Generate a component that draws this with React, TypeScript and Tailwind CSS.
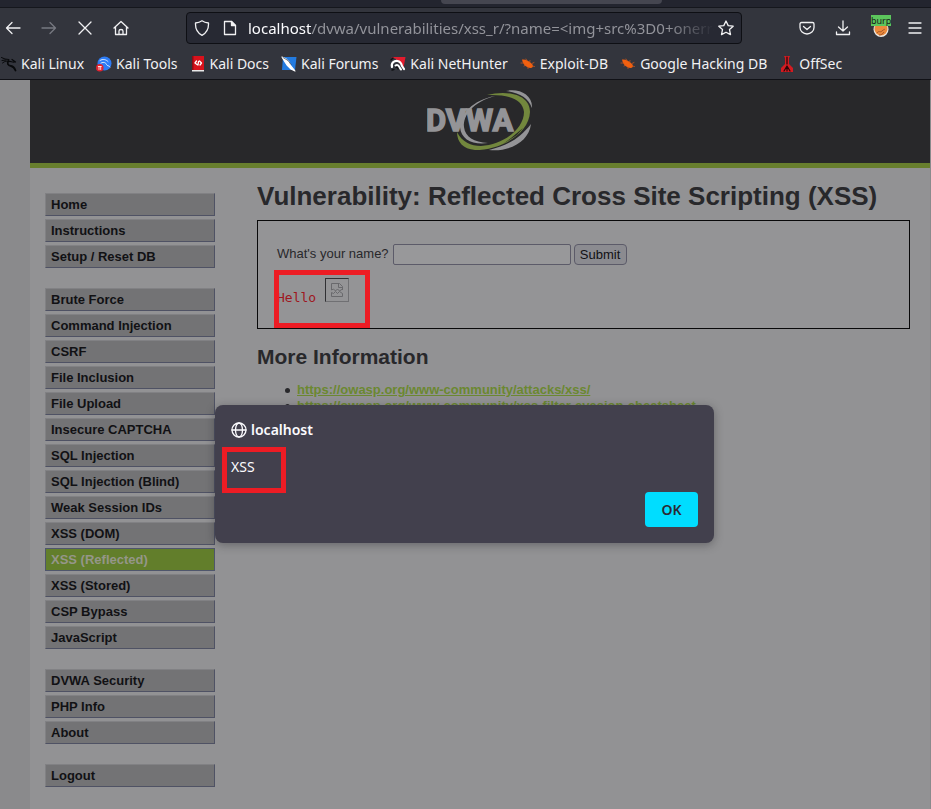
import type { ReactNode } from "react";

const menuGroups: string[][] = [
  ["Home", "Instructions", "Setup / Reset DB"],
  [
    "Brute Force",
    "Command Injection",
    "CSRF",
    "File Inclusion",
    "File Upload",
    "Insecure CAPTCHA",
    "SQL Injection",
    "SQL Injection (Blind)",
    "Weak Session IDs",
    "XSS (DOM)",
    "XSS (Reflected)",
    "XSS (Stored)",
    "CSP Bypass",
    "JavaScript",
  ],
  ["DVWA Security", "PHP Info", "About"],
  ["Logout"],
];

const activeItem = "XSS (Reflected)";

const references = [
  "https://owasp.org/www-community/attacks/xss/",
  "https://owasp.org/www-community/xss-filter-evasion-cheatsheet",
];

function Icon({ children, className = "size-4" }: { children: ReactNode; className?: string }) {
  return (
    <svg
      viewBox="0 0 16 16"
      className={`shrink-0 ${className}`}
      fill="none"
      stroke="currentColor"
      strokeWidth="1.3"
      strokeLinecap="round"
      strokeLinejoin="round"
      aria-hidden="true"
    >
      {children}
    </svg>
  );
}

const dragon = (
  <>
    <path d="M.5 1.500 4 3l4 .5M1 4.500 5 4" strokeWidth="1" />
    <path d="M1.500 7C4 5 6 4.500 8 5.500" strokeWidth="1" />
    <path d="M7.500 5c-2 2-.5 4.500 2.500 5 2.500.5 3.500 2 4.500 4.500" strokeWidth="1.800" />
    <path d="M8 5.500c2-.5 3 1 5.500.5M11 3.500 14.500 6" strokeWidth="1.200" />
  </>
);

const bookmarks: { label: string; icon: ReactNode }[] = [
  { label: "Kali Linux", icon: <g stroke="#08090b">{dragon}</g> },
  {
    label: "Kali Tools",
    icon: (
      <>
        <circle cx="8.500" cy="7.500" r="7" fill="#2d7cf6" stroke="none" />
        <path d="M4 4.500c3-2 6-1 8 1M5 7c3-1.500 5 0 5.500 1.500s3 1 3.500 2.500" stroke="#dcecff" strokeWidth="1" />
        <circle cx="3.800" cy="11.800" r="3.800" fill="#e02430" stroke="none" />
        <path d="M2.300 10.500h3M3 10.500v3M4.700 10.500v3" stroke="#fff" strokeWidth=".8" />
      </>
    ),
  },
  {
    label: "Kali Docs",
    icon: (
      <>
        <path d="M2 0h12v14H2z" fill="#d8121c" stroke="none" />
        <path d="M2 14h12v1.500H2z" fill="#e9e9e9" stroke="none" />
        <path d="M2 0h1.500v14H2z" fill="#900a12" stroke="none" />
        <path d="M6.500 5 5 7l2 1.500M9.500 5 11.500 7 10 9M8.500 5.500 8 9" stroke="#fff" />
      </>
    ),
  },
  {
    label: "Kali Forums",
    icon: (
      <>
        <path d="M2 1h13.500L14 14H1z" fill="#237be0" stroke="none" />
        <path d="m1 1 4 2 3 3 2 4 4 5-4-2-4-4-2-3z" fill="#fff" stroke="#fff" strokeWidth="1.200" />
        <path d="m2 1.500 5 3 3 4" stroke="#17222e" strokeWidth=".6" />
      </>
    ),
  },
  {
    label: "Kali NetHunter",
    icon: (
      <>
        <path d="M1 1h14.500L13.500 12 6 3z" fill="#e21b2d" stroke="none" />
        <path d="M2 11c-1-4 2-6.500 5.500-6 3 .5 4 3 4.500 5l2 3" stroke="#fff" strokeWidth="2.200" />
        <path d="M5.500 9.500c3-2 3.500 2 5.500 4" stroke="#fff" strokeWidth="2" />
        <path d="m1 4 2-2M4 13.500 2 14M8 13c0-1.500-1-2-2-1.500" stroke="#101114" />
      </>
    ),
  },
  { label: "Exploit-DB", icon: <Bug /> },
  { label: "Google Hacking DB", icon: <Bug /> },
  {
    label: "OffSec",
    icon: (
      <>
        <path d="M5 0h6l-1 2v6l4 4v4H2v-4l4-4V2z" fill="#d21b21" stroke="none" />
        <path d="M8 1v7M5 15l3-5 3 5M8 10v5" stroke="#270608" strokeWidth="1.200" />
      </>
    ),
  },
];

function Bug() {
  return (
    <g stroke="#d95a1a">
      <path d="M2 3.500c3-.5 7 1 10.500 5 1 2 0 3.500-2 3.500C6.500 11.500 3 9 2 3.500z" fill="#f2600f" stroke="none" />
      <path d="M1 7h3M6 3l1 2M10 4.500 9.500 7M4 10l2-1M12 7.500l2-1M12 10l2.500.5M8 11v1.500" strokeWidth=".7" />
    </g>
  );
}

function NavButton({ label, children, className = "" }: { label: string; children: ReactNode; className?: string }) {
  return (
    <button type="button" aria-label={label} className={`flex size-4 shrink-0 items-center justify-center ${className}`}>
      {children}
    </button>
  );
}

function BrowserBar() {
  return (
    <header className="h-20 overflow-hidden border-b border-[#101116] bg-[#33353d] font-['Noto_Sans',sans-serif] text-[#f1f1f3]">
      <div className="flex h-2 justify-center border-b border-[#15171d] bg-[#23252f] pl-[172px]">
        <div className="h-1 w-[221px] rounded-b bg-[#454650]" />
      </div>
      <div className="flex h-10 items-center pr-2 pl-1">
        <div className="flex w-[182px] shrink-0 items-center gap-5">
          <NavButton label="Back" className="ml-px">
            <Icon><path d="M15 8H1.500M7 2.500 1.500 8 7 13.500" /></Icon>
          </NavButton>
          <NavButton label="Forward" className="text-[#777981]">
            <Icon><path d="M1 8h13.500M9 2.500 14.500 8 9 13.500" /></Icon>
          </NavButton>
          <NavButton label="Stop">
            <Icon><path d="m2 2 12 12M14 2 2 14" /></Icon>
          </NavButton>
          <NavButton label="Home">
            <Icon><path d="m1 8 7-6.500L15 8M2.500 7v7.500h11V7M6 14.500V11q0-1.500 2-1.500t2 1.500v3.500" /></Icon>
          </NavButton>
        </div>
        <div className="flex h-8 w-[556px] min-w-0 items-center rounded-sm border border-[#0e0f14] bg-[#272933] px-[7px]">
          <Icon><path d="M8 .8c2 1.500 4 2 6.500 2.200.3 6-2 10-6.500 12.300C3.500 13 1.200 9 1.500 3 4 2.800 6 2.300 8 .8z" /></Icon>
          <Icon className="ml-3 size-4">
            <path d="M2.500 1.500h7l4 4v9h-11z" />
            <path d="M9.500 1.500v4h4z" fill="currentColor" />
          </Icon>
          <div className="ml-[10px] min-w-0 flex-1 overflow-hidden whitespace-nowrap mask-r-from-90% text-[15px] leading-6 text-[#92939a]">
            <span className="text-[#fbfbfe]">localhost</span>/dvwa/vulnerabilities/xss_r/?name=&lt;img+src%3D0+onerro
          </div>
          <NavButton label="Bookmark this page" className="ml-1">
            <Icon><path d="m8 1 2.200 4.600 5 .6-3.700 3.400 1 5L8 12.200l-4.500 2.400 1-5L.8 6.200l5-.6z" /></Icon>
          </NavButton>
        </div>
        <div className="ml-auto flex items-center gap-5">
          <NavButton label="Save to Pocket">
            <Icon><path d="M2.500 2.500h11q1.500 0 1.500 1.500v3.500a7 6.500 0 0 1-14 0V4q0-1.500 1.500-1.500zM4.500 6.500 8 9.500l3.500-3" /></Icon>
          </NavButton>
          <NavButton label="Downloads">
            <Icon><path d="M8 1v10M3.500 7 8 11l4.500-4M1.500 12v2.500h13V12" /></Icon>
          </NavButton>
          <button type="button" aria-label="Proxy: burp" className="relative flex size-5 items-end justify-center">
            <svg viewBox="0 0 16 16" className="size-4" aria-hidden="true">
              <circle cx="8" cy="7.500" r="7.500" fill="#ece9e4" />
              <circle cx="8" cy="7" r="6.500" fill="#eb8a3c" />
              <path d="M4 11c2-3 3 0 5-2s2-1 3-2M6 13c2 0 4-1 5-3" fill="none" stroke="#a4562b" strokeWidth="1" />
            </svg>
            <span className="absolute -top-[3px] left-0 h-[11px] w-5 bg-[#5cc65c] text-center text-[9px] leading-[11px] text-[#171a1a]">
              burp
            </span>
          </button>
          <NavButton label="Menu" className="-ml-1">
            <Icon><path d="M2 3h12M2 8h12M2 13h12" /></Icon>
          </NavButton>
        </div>
      </div>
      <nav aria-label="Bookmarks" className="flex h-[31px] items-center gap-3 pl-px text-[14px] leading-5 whitespace-nowrap">
        {bookmarks.map((b) => (
          <a key={b.label} href="#" className="flex items-center gap-1">
            <Icon>{b.icon}</Icon>
            {b.label}
          </a>
        ))}
      </nav>
    </header>
  );
}

function Logo() {
  return (
    <svg viewBox="0 0 106 62" className="h-[62px] w-[106px]" role="img" aria-label="DVWA">
      <path d="M79 1C92-2 106 5 105 18 101 8 93 3 79 1z" fill="#949497" />
      <path d="M104 34C102 51 84 62 62 60 82 55 93 48 104 34z" fill="#949497" />
      <path
        d="M60 5C80 0 103 4 103 22 102 44 74 60 48 60 36 59 30 52 30 42 35 52 44 56 54 56 76 55 97 39 97 22 96 9 80 4 60 5z"
        fill="#72873d"
      />
      <path d="M96 38 84 48l-8 6 14-9z" fill="#28282a" />
      <path d="M68 6C46 12 36 25 37 37c1 10 10 15 24 16-15 2-27-3-28-16C33 24 46 10 68 6z" fill="#949497" />
      <text
        x="-1"
        y="41"
        fill="#949497"
        stroke="#949497"
        strokeWidth="1.500"
        className="font-['Roboto',sans-serif] text-[31px] font-bold"
      >
        DVWA
      </text>
    </svg>
  );
}

function SideMenu() {
  return (
    <nav aria-label="Main menu" className="flex w-[170px] shrink-0 flex-col gap-5">
      {menuGroups.map((group) => (
        <ul key={group[0]} className="flex flex-col gap-[3px]">
          {group.map((item) => (
            <li key={item}>
              <a
                href="#"
                aria-current={item === activeItem ? "page" : undefined}
                className={
                  item === activeItem
                    ? "block h-[23px] border border-[#4f566c] bg-[#627e2b] px-[5px] text-[13px] leading-[21px] font-bold text-[#959689]"
                    : "block h-[23px] border border-t-[#818184] border-r-[#4f5264] border-b-[#4f5264] border-l-[#818184] bg-[#737375] px-[5px] text-[13px] leading-[21px] font-bold text-[#111114]"
                }
              >
                {item}
              </a>
            </li>
          ))}
        </ul>
      ))}
    </nav>
  );
}

function BrokenImage() {
  return (
    <span className="inline-flex size-6 items-center justify-center border border-t-[#303033] border-r-[#707073] border-b-[#707073] border-l-[#303033]">
      <svg viewBox="0 0 14 16" className="h-4 w-3.5" fill="none" stroke="#69696c" role="img" aria-label="Broken image">
        <path d="M1.500 8V1.500h8l3 3V8M8.500 1.500v4h4M1.500 8l2-1 2 2 2-2 2 2 3-2" />
        <path d="M1.500 14.500v-4l2 1 2-2 2 2 2-2 3 2v3z" />
      </svg>
    </span>
  );
}

function MainContent() {
  return (
    <main className="min-w-0 flex-1 text-[#28282b]">
      <h1 className="text-[26px] leading-8 font-bold">Vulnerability: Reflected Cross Site Scripting (XSS)</h1>
      <div className="mt-2 h-[109px] border border-[#09090a] bg-[#949496] px-[19px] pt-[23px] text-[13px]">
        <form className="flex items-start gap-[3px]" onSubmit={(e) => e.preventDefault()}>
          <label htmlFor="name" className="mr-px leading-5">What's your name?</label>
          <input
            id="name"
            name="name"
            type="text"
            className="h-[21px] w-[178px] rounded-xs border border-[#5c5b69] bg-[#98989a] px-1 outline-none"
          />
          <button
            type="submit"
            className="h-[21px] w-[53px] rounded border border-[#5c5b69] bg-[#8b8b90] leading-4 text-[#111114]"
          >
            Submit
          </button>
        </form>
        <div className="relative mt-[13px] flex items-start gap-[9px] font-['DejaVu_Sans_Mono',monospace] text-[#9f1620]">
          <span className="pt-3 leading-4">Hello</span>
          <BrokenImage />
          <div className="absolute -top-2 -left-[3px] h-[58px] w-24 border-5 border-[#ed1c24]" />
        </div>
      </div>
      <h2 className="mt-4 text-[21px] leading-6 font-bold">More Information</h2>
      <ul className="mt-[13px] pl-7 text-[13px] leading-4 font-bold">
        {references.map((url) => (
          <li key={url} className="flex items-center gap-[7px]">
            <span className="size-[5px] shrink-0 rounded-full bg-[#28282b]" />
            <a href="#" className="text-[#6b8830] underline">{url}</a>
          </li>
        ))}
      </ul>
    </main>
  );
}

function AlertDialog() {
  return (
    <div className="absolute top-[325px] right-0.5 left-0 flex justify-center">
      <div
        role="alertdialog"
        aria-labelledby="alert-title"
        aria-describedby="alert-text"
        className="flex h-[138px] w-[499px] flex-col rounded-lg bg-[#42404d] px-4 pt-[15px] pb-4 font-['Noto_Sans',sans-serif] text-[#fbfbfe] shadow-[0_2px_10px_rgba(20,20,25,0.35)]"
      >
        <h2 id="alert-title" className="flex items-center gap-1 text-[14px] leading-5 font-semibold">
          <Icon>
            <circle cx="8" cy="8" r="7" />
            <ellipse cx="8" cy="8" rx="3.500" ry="7" />
            <path d="M1 8h14" />
          </Icon>
          localhost
        </h2>
        <div className="relative mt-[17px] text-[14px] leading-5">
          <p id="alert-text">XSS</p>
          <div className="absolute -top-[10px] -left-[9px] h-[46px] w-16 border-5 border-[#ed1c24]" />
        </div>
        <button
          type="button"
          className="mt-auto h-[35px] w-[53px] self-end rounded bg-[#00ddff] text-[14px] leading-5 font-semibold text-[#2b2a33]"
        >
          OK
        </button>
      </div>
    </div>
  );
}

export default function App() {
  return (
    <div className="flex min-h-screen flex-col bg-[#8a8a8c] font-['Liberation_Sans',Arial,sans-serif]">
      <BrowserBar />
      <div className="relative flex flex-1 flex-col pr-px pl-[30px]">
        <div className="flex h-22 items-center justify-center border-b-5 border-[#687f2e] bg-[#28282a] pb-0.5">
          <Logo />
        </div>
        <div className="flex flex-1 gap-[42px] bg-[#929294] pr-5 pb-[22px] pl-[15px]">
          <div className="pt-[25px]">
            <SideMenu />
          </div>
          <div className="flex min-w-0 flex-1 pt-3">
            <MainContent />
          </div>
        </div>
        <AlertDialog />
      </div>
    </div>
  );
}
